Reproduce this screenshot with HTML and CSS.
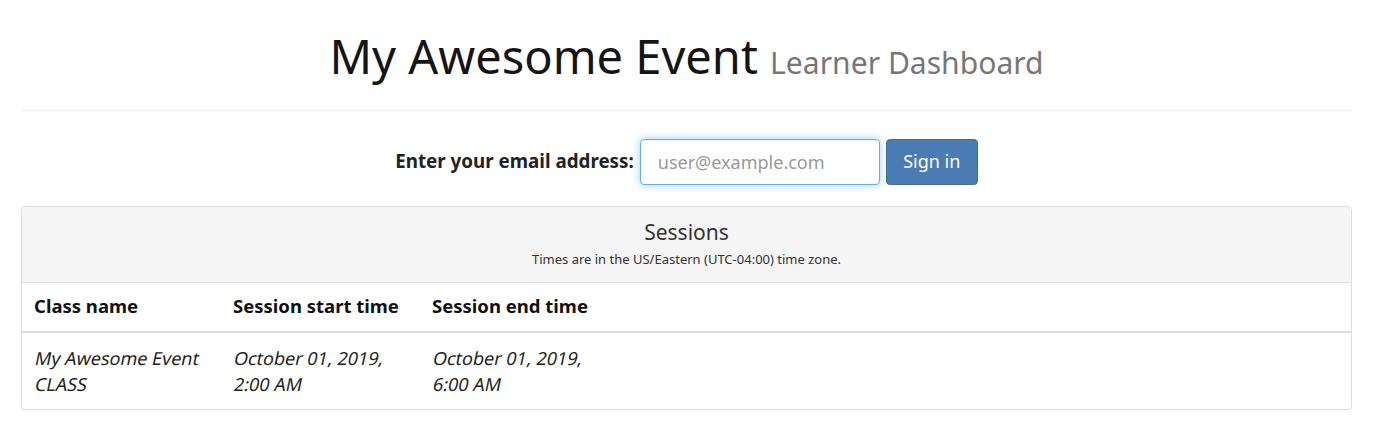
FILE: index.html
```html
<!DOCTYPE html>
<html lang="en">
<head>
<meta charset="utf-8">
<title>My Awesome Event - Learner Dashboard</title>
<link rel="stylesheet" href="styles.css">
</head>
<body>
<div class="container">
  <header class="page-header">
    <h1 class="title">My Awesome Event <small class="subtitle">Learner Dashboard</small></h1>
  </header>
  <form class="signin">
    <label class="signin-label" for="email">Enter your email address:</label>
    <input class="signin-input" id="email" type="email" placeholder="user@example.com">
    <button class="signin-btn" type="button">Sign in</button>
  </form>
  <section class="panel">
    <div class="panel-heading">
      <h3 class="panel-title">Sessions</h3>
      <p class="panel-note">Times are in the US/Eastern (UTC-04:00) time zone.</p>
    </div>
    <table class="sessions">
      <colgroup>
        <col class="col-fixed"><col class="col-fixed"><col class="col-fixed"><col>
      </colgroup>
      <thead>
        <tr><th>Class name</th><th>Session start time</th><th>Session end time</th><th></th></tr>
      </thead>
      <tbody>
        <tr>
          <td><span class="slant">My Awesome Event</span><br><span class="slant">CLASS</span></td>
          <td><span class="slant">October 01, 2019,</span><br><span class="slant">2:00 AM</span></td>
          <td><span class="slant">October 01, 2019,</span><br><span class="slant">6:00 AM</span></td>
          <td></td>
        </tr>
      </tbody>
    </table>
  </section>
</div>
</body>
</html>
```
FILE: styles.css
```css
* { box-sizing: border-box; }
body {
  margin: 0;
  font-family: "Noto Sans", "Open Sans", sans-serif;
  font-size: 18px;
  line-height: 1.42857;
  color: #222;
  background: #fff;
}
.container {
  width: 1331px;
  margin-left: 21px;
}
.page-header {
  padding: 31px 0 27px;
  border-bottom: 1px solid #eee;
  text-align: center;
}
.title {
  margin: 0;
  font-size: 47px;
  font-weight: 400;
  line-height: 1.1;
  color: #151515;
}
.subtitle {
  font-size: 64%;
  color: #777;
  font-weight: 400;
}
.signin {
  display: flex;
  justify-content: center;
  align-items: center;
  gap: 6px;
  margin: 28px 0 21px;
}
.signin-label {
  font-weight: 700;
  font-size: 18.8px;
  color: #222;
}
.signin-input {
  width: 240px;
  height: 46px;
  padding: 6px 17px;
  font: inherit;
  font-size: 18px;
  border: 1px solid #66afe9;
  border-radius: 4px;
  outline: 0;
  box-shadow: inset 0 1px 1px rgba(0,0,0,.075), 0 0 8px rgba(102,175,233,.6);
}
.signin-input::placeholder { color: #999; }
.signin-btn {
  height: 46px;
  width: 92px;
  font: inherit;
  font-size: 18px;
  color: #fff;
  background: #4a7bb2;
  border: 1px solid #3f6ea3;
  border-radius: 4px;
}
.panel {
  border: 1px solid #ddd;
  border-radius: 4px;
  box-shadow: 0 1px 1px rgba(0,0,0,.05);
  overflow: hidden;
}
.panel-heading {
  background: #f5f5f5;
  border-bottom: 1px solid #ddd;
  text-align: center;
  padding: 13px 15px 14px;
}
.panel-title {
  margin: 0;
  font-size: 21px;
  font-weight: 400;
  line-height: 1.2;
  color: #333;
}
.panel-note {
  margin: 5px 0 0;
  font-size: 13px;
  line-height: 1.4;
  color: #333;
}
.sessions {
  width: 100%;
  border-collapse: collapse;
  table-layout: fixed;
}
.col-fixed { width: 199px; }
.sessions th,
.sessions td {
  text-align: left;
  vertical-align: top;
  padding: 12px;
  line-height: 26px;
}
.sessions th {
  padding: 10px 12px 12px;
  font-weight: 700;
  font-size: 18.5px;
  color: #111;
  border-bottom: 2px solid #ddd;
}
.sessions td {
  color: #222;
}
.slant {
  display: inline-block;
  transform-origin: 0 75%;
  transform: skewX(-12deg);
}
```
